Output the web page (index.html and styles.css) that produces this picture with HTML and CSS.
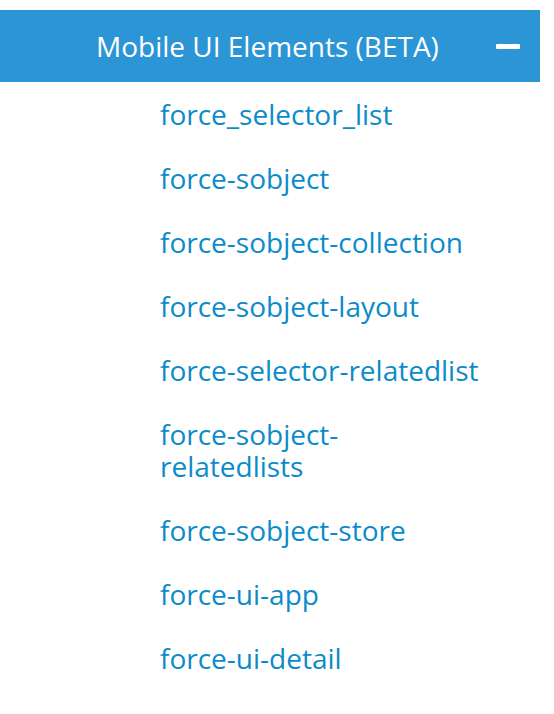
FILE: index.html
```html
<!DOCTYPE html>
<html lang="en">
<head>
<title>Mobile UI Elements</title>
<meta charset="utf-8">
<meta name="viewport" content="width=device-width, initial-scale=1">
<link rel="stylesheet" href="styles.css">
</head>
<body>

<div class="section">
  <div class="section-head">
    <span class="section-title">Mobile UI Elements (BETA)</span>
    <span class="toggle"></span>
  </div>

  <ul class="links">
    <li><a href="#">force_selector_list</a></li>
    <li><a href="#">force-sobject</a></li>
    <li><a href="#">force-sobject-collection</a></li>
    <li><a href="#">force-sobject-layout</a></li>
    <li><a href="#">force-selector-relatedlist</a></li>
    <li><a href="#">force-sobject-relatedlists</a></li>
    <li><a href="#">force-sobject-store</a></li>
    <li><a href="#">force-ui-app</a></li>
    <li><a href="#">force-ui-detail</a></li>
  </ul>
</div>

</body>
</html>
```

FILE: styles.css
```css
* {
  box-sizing: border-box;
}

body {
  margin: 0;
  padding-top: 10px;
  background: #fff;
  font-family: "Open Sans", Arial, sans-serif;
}

.section {
  width: 540px;
}

/* Blue header bar */
.section-head {
  display: flex;
  align-items: center;
  height: 72px;
  padding-left: 96px;
  background-color: #2b95d6;
  color: #fff;
}

.section-title {
  font-size: 28px;
  flex: 1;
}

.toggle {
  width: 24px;
  height: 5px;
  margin-right: 20px;
  border-radius: 1px;
  background: #fff;
}

/* Link list */
.links {
  list-style: none;
  margin: 0;
  padding: 16px 0 0 160px;
  width: 480px;
}

.links li {
  margin-bottom: 32px;
  font-size: 28px;
  line-height: 32px;
}

.links a {
  color: #0b8bc9;
  text-decoration: none;
}
```
